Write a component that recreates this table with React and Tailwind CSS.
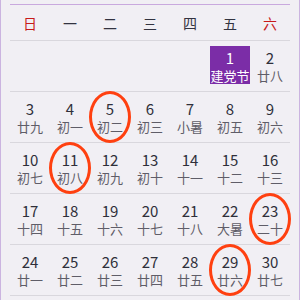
import React from 'react';

const weekdays = ['日', '一', '二', '三', '四', '五', '六'];

// [day, lunar, circled]
const weeks = [
  [null, null, null, null, null, [1, '建党节', false, true], [2, '廿八']],
  [[3, '廿九'], [4, '初一'], [5, '初二', true], [6, '初三'], [7, '小暑'], [8, '初五'], [9, '初六']],
  [[10, '初七'], [11, '初八', true], [12, '初九'], [13, '初十'], [14, '十一'], [15, '十二'], [16, '十三']],
  [[17, '十四'], [18, '十五'], [19, '十六'], [20, '十七'], [21, '十八'], [22, '大暑'], [23, '二十', true]],
  [[24, '廿一'], [25, '廿二'], [26, '廿三'], [27, '廿四'], [28, '廿五'], [29, '廿六', true], [30, '廿七']],
];

const DayCell = ({ cell }) => {
  if (!cell) return <div />;
  const [day, lunar, circled, holiday] = cell;

  if (holiday) {
    return (
      <div className="flex justify-center pt-[5px]">
        <div className="w-[40px] h-[38px] bg-[#7b2da7] flex flex-col items-center text-white">
          <span className="text-[15px] leading-[18px] mt-[3px]">{day}</span>
          <span className="text-[13px] leading-[17px]">{lunar}</span>
        </div>
      </div>
    );
  }

  return (
    <div className="relative flex flex-col items-center pt-[8px]">
      <span className="text-[15px] leading-[18px] text-[#2f2f3a]">{day}</span>
      <span className="text-[13px] leading-[17px] text-[#5f5d68]">{lunar}</span>
      {circled && (
        <span className="absolute left-1/2 top-1/2 -translate-x-1/2 -translate-y-1/2 w-[42px] h-[52px] rounded-[50%] border-[3px] border-[#ff4010]"></span>
      )}
    </div>
  );
};

export default function App() {
  return (
    <div
      className="w-[300px] h-[300px] overflow-hidden bg-[#f1eff4] border-x border-[#cbb4e0] px-[9px] pt-[4px]"
      style={{ fontFamily: '"Noto Sans CJK SC", "Noto Sans", sans-serif' }}
    >
      <div className="border-t border-[#c9a9de]">
        <div className="grid grid-cols-7 h-[36px] border-b border-[#d9d7dd] items-center">
          {weekdays.map((w, i) => (
            <span
              key={w}
              className={`text-center text-[14px] leading-[18px] ${i === 0 || i === 6 ? 'text-[#c81a1a]' : 'text-[#333340]'}`}
            >
              {w}
            </span>
          ))}
        </div>
        {weeks.map((week, wi) => (
          <div key={wi} className="grid grid-cols-7 h-[51px] border-b border-[#d9d7dd]">
            {week.map((cell, ci) => (
              <DayCell key={ci} cell={cell} />
            ))}
          </div>
        ))}
      </div>
    </div>
  );
}
